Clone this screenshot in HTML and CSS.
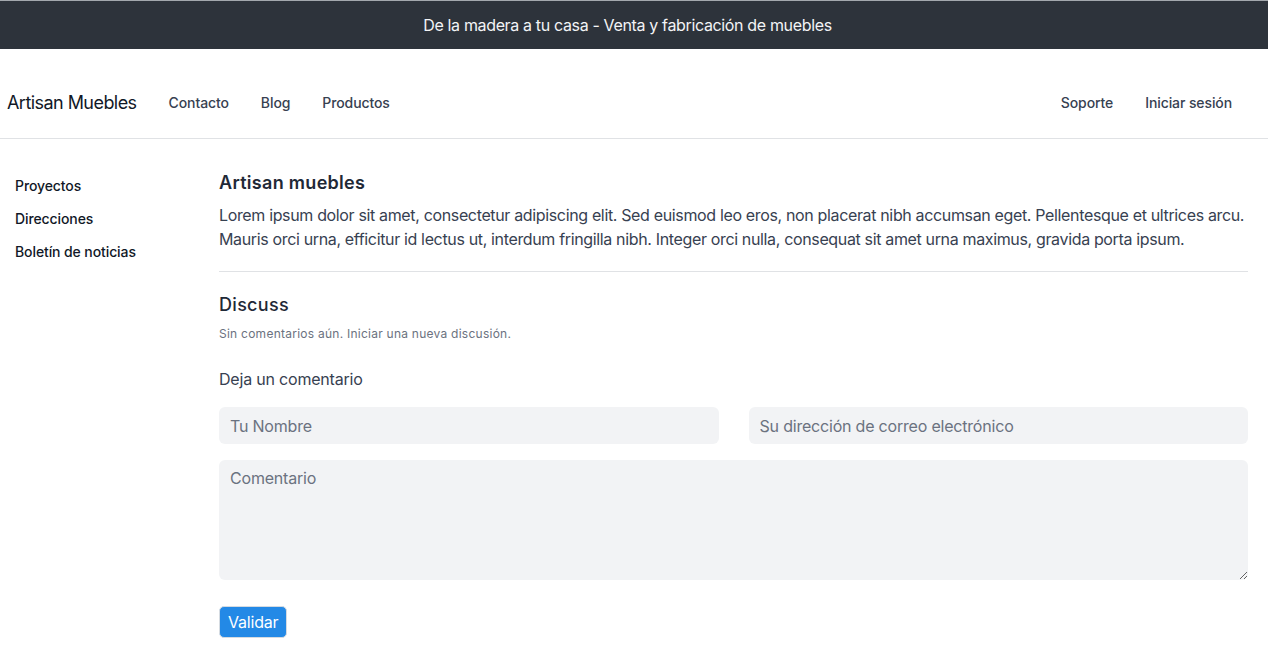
FILE: index.html
```html
<!DOCTYPE html>
<html lang="es">
<head>
<meta charset="utf-8">
<title>Artisan Muebles</title>
<link rel="stylesheet" href="styles.css">
</head>
<body>
<div class="topbar">De la madera a tu casa - Venta y fabricación de muebles</div>
<nav class="navbar">
  <a class="brand" href="#">Artisan Muebles</a>
  <ul class="nav-links">
    <li><a href="#">Contacto</a></li>
    <li><a href="#">Blog</a></li>
    <li><a href="#">Productos</a></li>
  </ul>
  <ul class="nav-links nav-right">
    <li><a href="#">Soporte</a></li>
    <li><a href="#">Iniciar sesión</a></li>
  </ul>
</nav>
<div class="layout">
  <aside class="sidebar">
    <a href="#">Proyectos</a>
    <a href="#">Direcciones</a>
    <a href="#">Boletín de noticias</a>
  </aside>
  <main class="content">
    <h2 class="title">Artisan muebles</h2>
    <p class="lead">Lorem ipsum dolor sit amet, consectetur adipiscing elit. Sed euismod leo eros, non placerat nibh accumsan eget. Pellentesque et ultrices arcu. Mauris orci urna, efficitur id lectus ut, interdum fringilla nibh. Integer orci nulla, consequat sit amet urna maximus, gravida porta ipsum.</p>
    <hr class="divider">
    <h2 class="title discuss">Discuss</h2>
    <p class="muted">Sin comentarios aún. Iniciar una nueva discusión.</p>
    <form class="comment-form">
      <h3 class="form-title">Deja un comentario</h3>
      <div class="row">
        <input class="field" type="text" placeholder="Tu Nombre">
        <input class="field" type="email" placeholder="Su dirección de correo electrónico">
      </div>
      <textarea class="field area" placeholder="Comentario"></textarea>
      <div><button class="btn" type="button">Validar</button></div>
    </form>
  </main>
</div>
</body>
</html>
```
FILE: styles.css
```css
* { box-sizing: border-box; }
body {
  margin: 0;
  font-family: Inter, "Noto Sans", "Liberation Sans", sans-serif;
  color: #1f2937;
  background: #fff;
}
a { text-decoration: none; color: inherit; }
.topbar {
  height: 49px;
  border-top: 1px solid #a3a8ad;
  background: #2d333b;
  color: #f3f4f6;
  font-size: 16px;
  display: flex;
  align-items: center;
  justify-content: center;
  padding-right: 13px;
  letter-spacing: -0.35px;
}
.navbar {
  height: 90px;
  border-bottom: 1px solid #e0e2e5;
  display: flex;
  align-items: center;
  padding: 18px 20px 0 7px;
}
.brand {
  font-size: 18px;
  color: #111827;
  margin-right: 16px;
  letter-spacing: -0.55px;
}
.nav-links {
  list-style: none;
  margin: 0;
  padding: 0;
  display: flex;
}
.nav-links a {
  display: block;
  padding: 8px 16px;
  font-size: 14px;
  color: #374151;
  font-weight: 500;
  letter-spacing: -0.1px;
}
.nav-right { margin-left: auto; }
.layout {
  display: flex;
  padding: 0 20px 0 15px;
}
.sidebar {
  width: 204px;
  flex-shrink: 0;
  padding-top: 37px;
  display: flex;
  flex-direction: column;
  gap: 13px;
}
.sidebar a {
  font-size: 14px;
  line-height: 20px;
  color: #111827;
  font-weight: 500;
  letter-spacing: -0.1px;
}
.content {
  flex: 1;
  padding-top: 30px;
  min-width: 0;
}
.title {
  margin: 0;
  font-size: 18px;
  line-height: 28px;
  font-weight: 600;
  color: #1f2937;
  letter-spacing: 0.3px;
}
.lead {
  margin: 6px 0 0;
  font-size: 16px;
  line-height: 24px;
  color: #374151;
  letter-spacing: -0.35px;
}
.divider {
  border: 0;
  border-top: 1px solid #e0e2e5;
  margin: 20px 0 19px;
}
.discuss { font-weight: 500; }
.muted {
  margin: 7px 0 0;
  font-size: 12px;
  line-height: 16px;
  color: #6b7280;
  letter-spacing: 0.25px;
}
.comment-form {
  margin-top: 25px;
  display: flex;
  flex-direction: column;
  gap: 16px;
}
.form-title {
  margin: 0;
  font-size: 16px;
  line-height: 24px;
  font-weight: 400;
  color: #374151;
  letter-spacing: -0.2px;
}
.row {
  display: grid;
  grid-template-columns: 1fr 1fr;
  gap: 30px;
}
.field {
  font-family: inherit;
  font-size: 16px;
  height: 37px;
  padding: 0 11px;
  border: 0;
  border-radius: 6px;
  background: #f2f3f5;
  color: #374151;
  letter-spacing: -0.2px;
}
.field::placeholder { color: #6b7280; }
.area {
  height: 120px;
  padding: 8px 11px;
  resize: vertical;
  display: block;
  width: 100%;
}
.btn {
  margin-top: 10px;
  font-family: inherit;
  font-size: 16px;
  height: 32px;
  padding: 0 8px;
  border: 1px solid #d5dbe1;
  border-radius: 5px;
  background: #2389e6;
  color: #fff;
  letter-spacing: -0.2px;
  cursor: pointer;
}
```
